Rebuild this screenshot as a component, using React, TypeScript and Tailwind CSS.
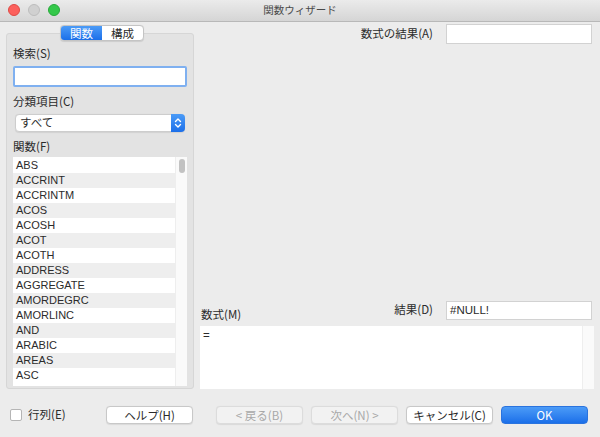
import React from 'react';

const jp = { fontFamily: '"Noto Sans CJK JP", "Liberation Sans", sans-serif' };
const lat = { fontFamily: '"Liberation Sans", "Noto Sans CJK JP", sans-serif' };

const functions = [
  'ABS', 'ACCRINT', 'ACCRINTM', 'ACOS', 'ACOSH', 'ACOT', 'ACOTH', 'ADDRESS',
  'AGGREGATE', 'AMORDEGRC', 'AMORLINC', 'AND', 'ARABIC', 'AREAS', 'ASC',
];

const TrafficLights = () => (
  <div className="flex items-center gap-[8px] pl-[8px]">
    <span className="w-[12px] h-[12px] rounded-full bg-[#fc605c] border border-[#de4a45]" />
    <span className="w-[12px] h-[12px] rounded-full bg-[#d0d0d0] border border-[#bdbdbd]" />
    <span className="w-[12px] h-[12px] rounded-full bg-[#34c84a] border border-[#27a93a]" />
  </div>
);

const Button: React.FC<{ label: string; disabled?: boolean; primary?: boolean }> = ({ label, disabled, primary }) => {
  const base = 'w-[87px] h-[18px] rounded-[4px] text-[11.5px] leading-[16px] flex items-center justify-center';
  if (primary) {
    return (
      <div className={`${base} bg-gradient-to-b from-[#4b9bf7] to-[#1b6fe9] border border-[#2a73de] text-white`} style={jp}>
        {label}
      </div>
    );
  }
  return (
    <div
      className={`${base} border ${disabled ? 'bg-[#f2f2f2] border-[#dcdcdc] text-[#a8a8a8]' : 'bg-white border-[#c8c8c8] text-[#2a2a2a]'} shadow-[0_0.5px_1px_rgba(0,0,0,0.08)]`}
      style={jp}
    >
      {label}
    </div>
  );
};

export default function App() {
  return (
    <div className="w-[600px] h-[437px] bg-[#ececec] flex flex-col overflow-hidden text-[#2b2b2b]">
      {/* title bar */}
      <div className="h-[22px] relative flex items-center bg-gradient-to-b from-[#ebebeb] to-[#d5d5d5] border-b border-[#b8b8b8]">
        <TrafficLights />
        <div className="absolute inset-0 flex items-center justify-center text-[10.5px] text-[#4a4a4a]" style={jp}>
          関数ウィザード
        </div>
      </div>

      <div className="flex-1 flex pl-[6px] pr-[6px]">
        {/* left column */}
        <div className="w-[188px] flex flex-col pt-[3px]">
          <div className="relative z-10 flex justify-center pl-[4px]">
            <div className="flex h-[16px] rounded-[4px] border border-[#c4c4c4] bg-white shadow-[0_0.5px_1px_rgba(0,0,0,0.1)] overflow-hidden text-[11.5px] leading-[14px]" style={jp}>
              <div className="w-[41px] flex items-center justify-center bg-gradient-to-b from-[#4b9bf7] to-[#1b6fe9] text-white">関数</div>
              <div className="w-[41px] flex items-center justify-center text-[#2a2a2a]">構成</div>
            </div>
          </div>
          <div className="-mt-[8px] h-[356px] bg-[#e3e3e3] border border-[#d6d6d6] rounded-[3px] px-[6px] pt-[12px] flex flex-col">
            <div className="text-[11.5px] leading-[14px]" style={jp}>検索(S)</div>
            <div className="mt-[6px] h-[21px] bg-white border-[2px] border-[#7fb0f0] rounded-[2px]" />
            <div className="mt-[7px] text-[11.5px] leading-[14px]" style={jp}>分類項目(C)</div>
            <div className="mt-[6px] mx-[2px] h-[18px] bg-white border border-[#cdcdcd] rounded-[4px] flex items-center shadow-[0_0.5px_1px_rgba(0,0,0,0.08)]">
              <span className="flex-1 pl-[4px] text-[11.5px]" style={jp}>すべて</span>
              <span className="w-[14px] h-[18px] -mr-[1px] rounded-r-[4px] bg-gradient-to-b from-[#4b9bf7] to-[#1b6fe9] flex items-center justify-center">
                <svg width="8" height="12" viewBox="0 0 8 12" fill="none" stroke="white" strokeWidth="1.4" strokeLinecap="round" strokeLinejoin="round">
                  <path d="M1.5 4.5 L4 2 L6.5 4.5" />
                  <path d="M1.5 7.5 L4 10 L6.5 7.5" />
                </svg>
              </span>
            </div>
            <div className="mt-[7px] text-[11.5px] leading-[14px]" style={jp}>関数(F)</div>
            <div className="mt-[4px] h-[229px] bg-white flex overflow-hidden">
              <div className="flex-1 flex flex-col pt-[1px]">
                {functions.map((f, i) => (
                  <div
                    key={f}
                    className={`h-[15px] shrink-0 pl-[3px] text-[11px] leading-[15px] ${i % 2 === 1 ? 'bg-[#eeeeee]' : 'bg-white'}`}
                    style={lat}
                  >
                    {f}
                  </div>
                ))}
              </div>
              <div className="w-[12px] bg-[#fafafa] border-l border-[#eeeeee] flex justify-center pt-[2px]">
                <div className="w-[6px] h-[14px] rounded-full bg-[#c2c2c2]" />
              </div>
            </div>
          </div>
        </div>

        {/* right column */}
        <div className="flex-1 flex flex-col pl-[6px] pt-[2px]">
          <div className="flex items-center justify-end gap-[13px] pr-[2px]">
            <span className="text-[11.5px]" style={jp}>数式の結果(A)</span>
            <div className="w-[146px] h-[20px] bg-white border border-[#d2d2d2]" />
          </div>
          <div className="flex-1" />
          <div className="flex items-end justify-between pr-[2px]">
            <span className="text-[11.5px] leading-[14px] mb-[-1px] pl-[1px]" style={jp}>数式(M)</span>
            <div className="flex items-center gap-[13px]">
              <span className="text-[11.5px]" style={jp}>結果(D)</span>
              <div className="w-[146px] h-[19px] bg-white border border-[#d2d2d2] text-[11.5px] leading-[17px] pl-[3px]" style={lat}>
                #NULL!
              </div>
            </div>
          </div>
          <div className="mt-[6px] h-[63px] bg-white flex">
            <div className="flex-1 pl-[3px] pt-[1px] text-[11.5px]" style={lat}>=</div>
            <div className="w-[12px] bg-[#fafafa] border-l border-[#eeeeee]" />
          </div>
        </div>
      </div>

      {/* footer */}
      <div className="h-[49px] flex items-start pt-[17px] pl-[10px] pr-[12px]">
        <div className="flex items-center gap-[6px] w-[96px] h-[18px]">
          <span className="w-[12px] h-[12px] bg-white border border-[#b5b5b5] rounded-[2px]" />
          <span className="text-[11.5px]" style={jp}>行列(E)</span>
        </div>
        <Button label="ヘルプ(H)" />
        <div className="w-[23px]" />
        <div className="flex gap-[8px]">
          <Button label="< 戻る(B)" disabled />
          <Button label="次へ(N) >" disabled />
          <Button label="キャンセル(C)" />
          <Button label="OK" primary />
        </div>
      </div>
    </div>
  );
}
